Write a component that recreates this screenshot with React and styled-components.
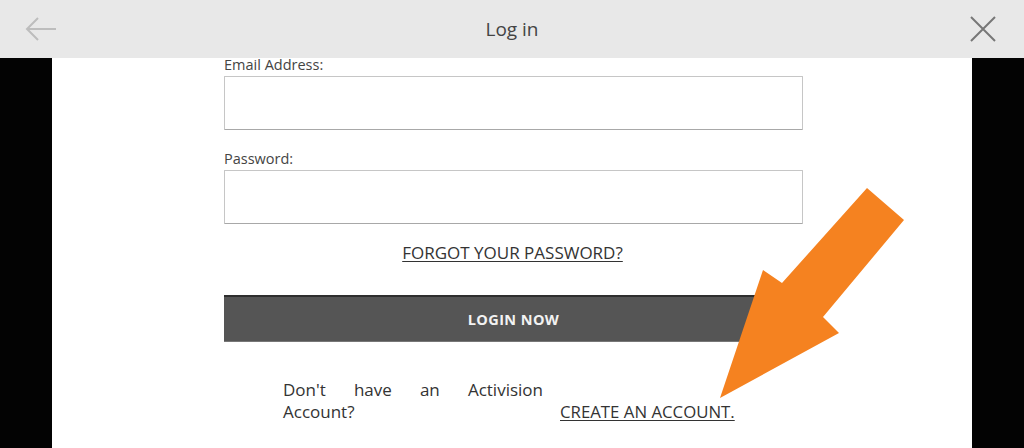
import styled, { createGlobalStyle } from "styled-components";

const GlobalStyle = createGlobalStyle`
  html, body {
    margin: 0;
    padding: 0;
    width: 1024px;
    height: 448px;
    overflow: hidden;
    font-family: "Open Sans", "Liberation Sans", sans-serif;
  }
`;

const Screen = styled.div`
  width: 1024px;
  height: 448px;
  display: flex;
  flex-direction: column;
  position: relative;
  overflow: hidden;
`;

const TopBar = styled.header`
  height: 58px;
  flex: none;
  background: #e8e8e8;
  display: flex;
  align-items: center;
  justify-content: space-between;
  padding: 0 24px 0 24px;
`;

const Title = styled.h1`
  margin: 0;
  font-size: 19px;
  font-weight: 400;
  color: #444;
`;

const IconButton = styled.button`
  border: 0;
  background: none;
  padding: 0;
  display: flex;
  width: 34px;
  height: 34px;
  align-items: center;
  justify-content: center;
`;

const Body = styled.main`
  flex: 1;
  display: flex;
  background: #000;
`;

const Side = styled.div`
  width: 52px;
  flex: none;
  background: #030303;
`;

const Panel = styled.section`
  flex: 1;
  background: #fff;
  padding-left: 172px;
`;

const Form = styled.form`
  width: 579px;
  display: flex;
  flex-direction: column;
`;

const Label = styled.label`
  font-size: 14.5px;
  line-height: 13px;
  color: #444;
  margin: ${(p) => (p.$first ? "0" : "22px")} 0 5px;
`;

const Input = styled.input`
  box-sizing: border-box;
  height: 54px;
  border: 1px solid #c6c6c6;
  border-bottom-color: #a8a8a8;
  border-radius: 1px;
  background: #fff;
`;

const LinkText = styled.a`
  font-size: ${(p) => (p.$small ? "16.8px" : "17px")};
  line-height: 22px;
  color: #333;
  text-decoration: underline;
  text-underline-offset: 2px;
`;

const Forgot = styled.div`
  margin-top: 18px;
  text-align: center;
  padding-right: 2px;
`;

const LoginButton = styled.button`
  margin-top: 31px;
  height: 47px;
  border: 0;
  border-top: 2px solid #2e2e2e;
  border-bottom: 1px solid #777;
  background: #555;
  color: #f2f2f2;
  font-family: "Open Sans", "Liberation Sans", sans-serif;
  font-weight: 700;
  font-size: 14.5px;
  letter-spacing: 0.4px;
`;

const Bottom = styled.div`
  margin-top: 37px;
  padding-left: 59px;
  display: flex;
  align-items: flex-end;
  gap: 17px;
`;

const Prompt = styled.p`
  margin: 0;
  width: 260px;
  flex: none;
  font-size: 17px;
  line-height: 22px;
  color: #333;
  text-align: justify;
`;

const Arrow = styled.svg`
  position: absolute;
  left: 0;
  top: 0;
  pointer-events: none;
`;

const App = () => {
  return (
    <>
      <GlobalStyle />
      <Screen>
        <TopBar>
          <IconButton aria-label="Back">
            <svg width="32" height="24" viewBox="0 0 32 24" fill="none" stroke="#bdbdbd" strokeWidth="2">
              <path d="M31 12H2M13 1L2 12l11 11" />
            </svg>
          </IconButton>
          <Title>Log in</Title>
          <IconButton aria-label="Close">
            <svg width="26" height="26" viewBox="0 0 26 26" fill="none" stroke="#777" strokeWidth="2">
              <path d="M1 1l24 24M25 1L1 25" />
            </svg>
          </IconButton>
        </TopBar>
        <Body>
          <Side />
          <Panel>
            <Form>
              <Label $first htmlFor="email">Email Address:</Label>
              <Input id="email" type="email" />
              <Label htmlFor="password">Password:</Label>
              <Input id="password" type="password" />
              <Forgot>
                <LinkText>FORGOT YOUR PASSWORD?</LinkText>
              </Forgot>
              <LoginButton type="button">LOGIN NOW</LoginButton>
              <Bottom>
                <Prompt>Don't have an Activision Account?</Prompt>
                <LinkText $small>CREATE AN ACCOUNT.</LinkText>
              </Bottom>
            </Form>
          </Panel>
          <Side />
        </Body>
        <Arrow width="1024" height="448">
          <polygon
            points="720,398 763,270 782,283 867,188 904,220 823,317 839,333"
            fill="#f58220"
          />
        </Arrow>
      </Screen>
    </>
  );
};

export default App;
